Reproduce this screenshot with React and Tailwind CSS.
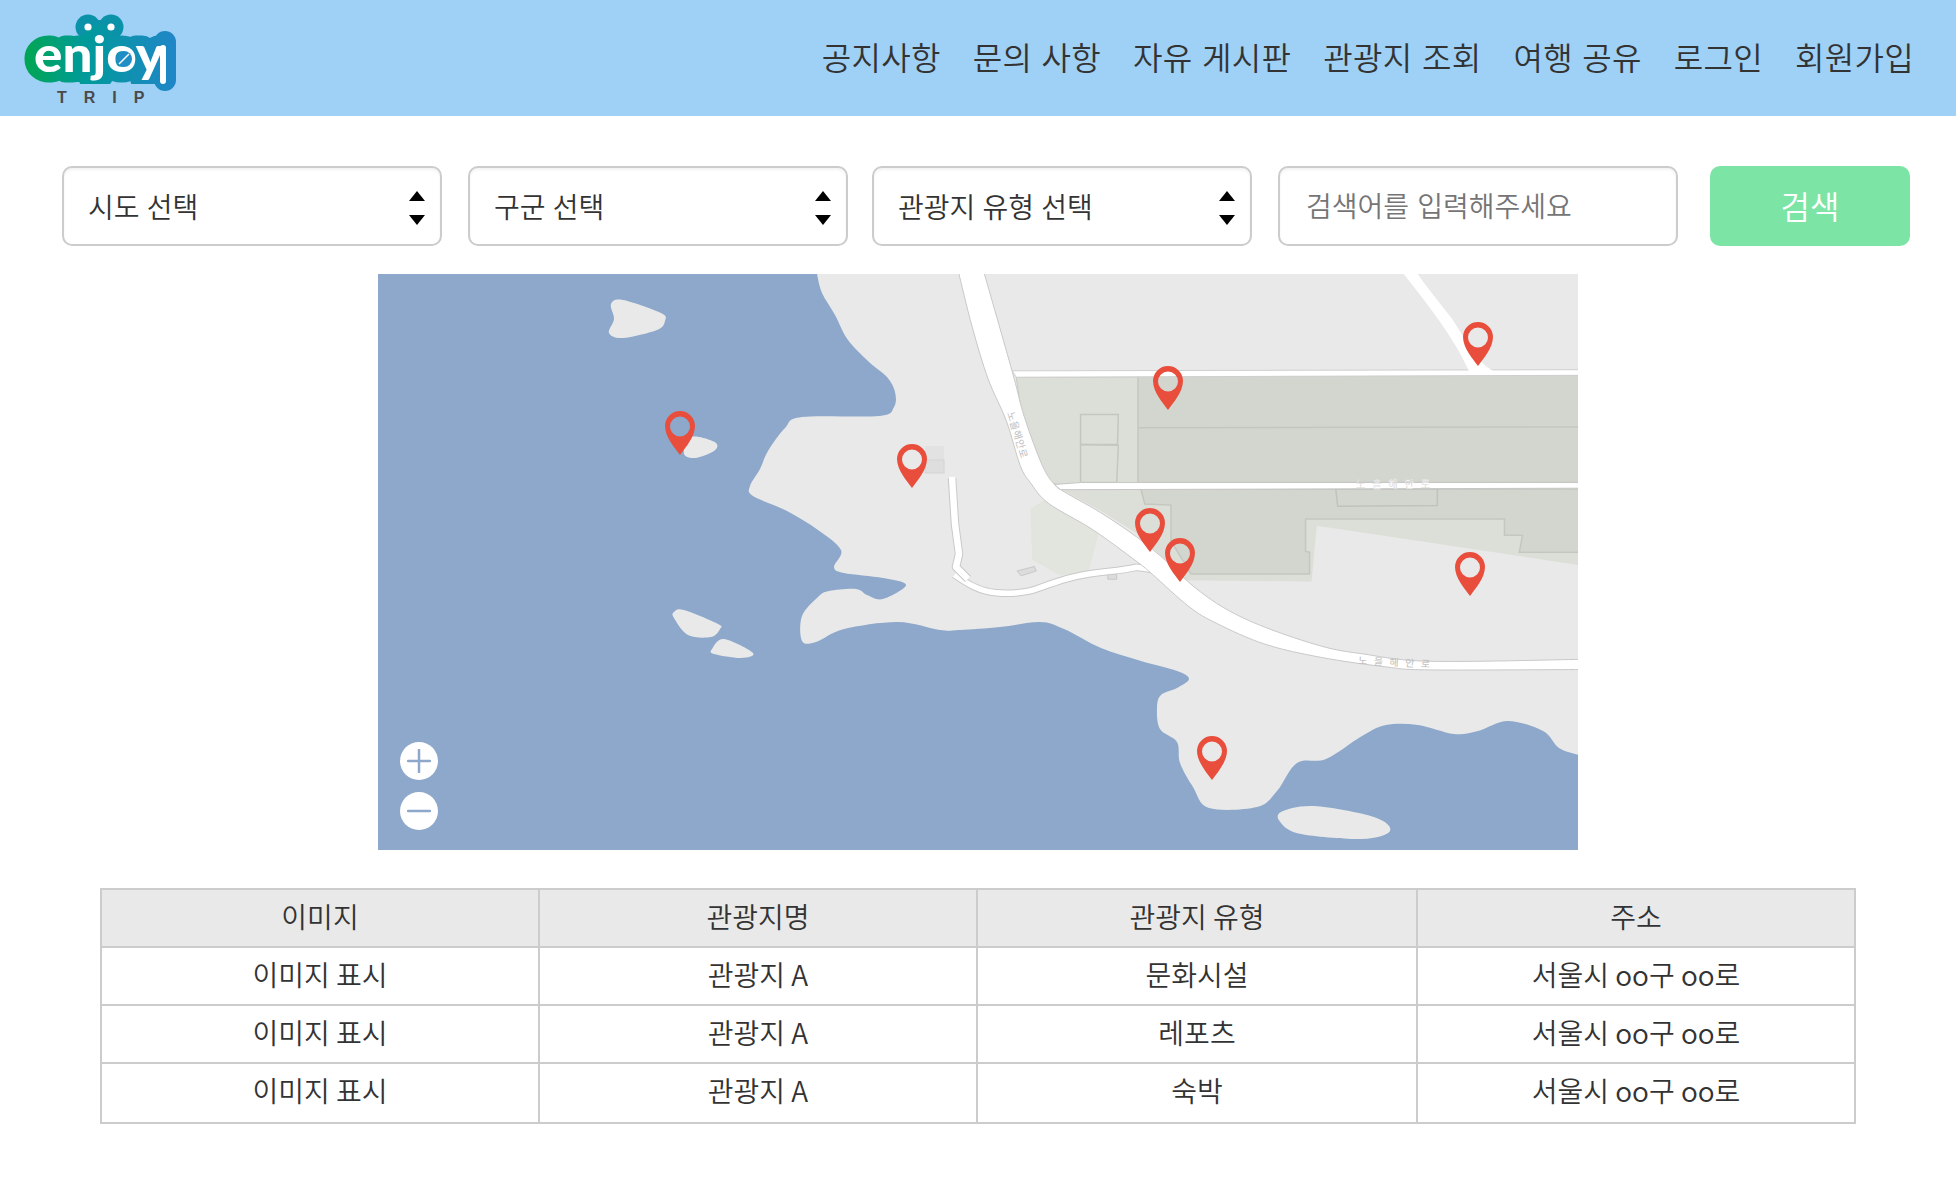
const FONT = '"Noto Sans CJK KR", "Noto Sans", sans-serif';

function curve(pts, closed) {
  const n = pts.length;
  const at = (i) => (closed ? pts[(i + n) % n] : pts[Math.max(0, Math.min(n - 1, i))]);
  let d = `${pts[0][0]} ${pts[0][1]}`;
  const end = closed ? n : n - 1;
  for (let i = 0; i < end; i++) {
    const p0 = at(i - 1), p1 = at(i), p2 = at(i + 1), p3 = at(i + 2);
    const c1 = [p1[0] + (p2[0] - p0[0]) / 6, p1[1] + (p2[1] - p0[1]) / 6];
    const c2 = [p2[0] - (p3[0] - p1[0]) / 6, p2[1] - (p3[1] - p1[1]) / 6];
    d += ` C${c1[0].toFixed(1)} ${c1[1].toFixed(1)} ${c2[0].toFixed(1)} ${c2[1].toFixed(1)} ${p2[0]} ${p2[1]}`;
  }
  return d;
}

function Logo() {
  return (
    <svg width="180" height="116" viewBox="0 0 180 116" className="shrink-0">
      <defs>
        <linearGradient id="lg" gradientUnits="userSpaceOnUse" x1="24" y1="0" x2="176" y2="0">
          <stop offset="0" stopColor="#00a651" />
          <stop offset="0.4" stopColor="#009a9a" />
          <stop offset="1" stopColor="#2086c8" />
        </linearGradient>
        <clipPath id="c1"><rect x="0" y="0" width="180" height="84" /></clipPath>
      </defs>
      <circle cx="88" cy="27" r="12.5" fill="#0a93a8" />
      <circle cx="111" cy="27" r="12.5" fill="#0a93a8" />
      <rect x="88" y="20" width="23" height="20" fill="#0a93a8" />
      <g clipPath="url(#c1)">
        <text x="34" y="72" fontFamily='"Lato", sans-serif' fontWeight="900" fontSize="50" textLength="130" lengthAdjust="spacingAndGlyphs" fill="url(#lg)" stroke="url(#lg)" strokeWidth="21" strokeLinejoin="round">enjoy</text>
      </g>
      <path d="M165 42 V80" stroke="url(#lg)" strokeWidth="22" strokeLinecap="round" />
      <g clipPath="url(#c1)">
        <text x="34" y="72" fontFamily='"Lato", sans-serif' fontWeight="900" fontSize="50" textLength="130" lengthAdjust="spacingAndGlyphs" fill="#fff">enjoy</text>
      </g>
      <path d="M163 48 V81" stroke="#fff" strokeWidth="6" strokeLinecap="round" />
      <circle cx="124" cy="59" r="8" fill="#1e8ec4" />
      <path d="M119 64 L126 57 L129 54 L122 61 Z" fill="#fff" stroke="#fff" strokeWidth="1.5" />
      <circle cx="88" cy="27" r="3.6" fill="#fff" />
      <circle cx="111" cy="27" r="3.6" fill="#fff" />
      <text x="57" y="103" fontFamily='"Liberation Sans", sans-serif' fontWeight="700" fontSize="16" fill="#4a4a4a" letterSpacing="17">TRIP</text>
    </svg>
  );
}

function Arrows() {
  return (
    <svg width="16" height="34" viewBox="0 0 16 34" className="absolute right-[15px] top-[23px] pointer-events-none">
      <path d="M8 0 L16 10 L0 10 Z" fill="#000" />
      <path d="M0 24 L16 24 L8 34 Z" fill="#000" />
    </svg>
  );
}

function Sel({ label, className }) {
  return (
    <div className={`relative flex h-[80px] w-[380px] shrink-0 items-center rounded-[10px] border-2 border-[#ccc] bg-white pl-[24px] text-[28px] font-[350] text-[#333] [word-spacing:1px] shadow-[inset_0_2px_3px_rgba(0,0,0,0.05)] ${className}`}>
      {label}
      <Arrows />
    </div>
  );
}

function Pin({ x, y }) {
  return (
    <path
      transform={`translate(${x} ${y})`}
      fillRule="evenodd"
      fill="#e94e3c"
      d="M0 0 C-5 -7 -15 -18 -15 -29 A15 15 0 0 1 15 -29 C15 -18 5 -7 0 0 Z M0 -38.5 A10 10 0 1 0 0 -18.5 A10 10 0 1 0 0 -38.5 Z"
    />
  );
}

const coast = [[439,0],[444,19],[457,41],[470,66],[491,88],[509,103],[517,118],[516,133],[501,142],[424,143],[407,154],[390,177],[382,195],[372,212],[375,222],[409,237],[440,256],[463,276],[456,293],[466,299],[505,304],[528,311],[505,325],[489,321],[478,315],[451,317],[440,323],[424,342],[424,367],[438,368],[466,355],[520,348],[562,356],[582,356],[622,353],[662,348],[686,355],[723,374],[763,387],[799,397],[811,405],[799,414],[783,421],[779,434],[782,455],[799,468],[802,489],[815,513],[831,534],[879,533],[899,517],[919,489],[948,485],[984,462],[1008,451],[1040,451],[1076,460],[1100,457],[1130,447],[1165,457],[1181,474],[1201,481]];
const islands = [
  [[233,30],[245,26],[283,39],[287,47],[279,56],[245,64],[231,59],[236,45]],
  [[310,165],[321,163],[338,169],[336,177],[317,184],[306,180]],
  [[296,338],[306,336],[340,350],[342,355],[333,363],[310,361],[296,344]],
  [[346,365],[375,379],[363,384],[336,380],[334,375]],
  [[903,538],[936,532],[996,543],[1012,557],[984,565],[923,560],[903,549]],
];
const roadLeft = [[-5,0],[30,150],[70,290],[115,400],[150,520],[175,565],[220,620],[330,690],[440,775],[480,810],[570,895],[640,940],[760,995],[900,1030],[1060,1055],[1170,1063],[1545,1062]];
const roadRight = [[1545,1035],[1170,1040],[1000,1020],[900,1000],[760,950],[660,900],[580,840],[515,775],[440,710],[350,645],[260,590],[235,570],[205,520],[160,390],[130,270],[58,0]];
const branch = "M1100 5 C1170 100 1230 180 1268 272 L1340 272 C1305 262 1290 240 1225 130 C1195 90 1165 50 1135 5 Z";
const small = "M-14 810 C20 835 50 855 90 858 C130 862 170 856 190 848 C230 832 270 818 300 812 C350 802 400 800 440 790 L480 796";

function MapView() {
  return (
    <div className="relative mx-auto mt-[28px] h-[576px] w-[1200px] overflow-hidden bg-[#8da8ca]">
      <svg width="1200" height="576" viewBox="0 0 1200 576" className="block">
        <path d={`M${curve(coast)} L1201 -1 L439 -1 Z`} fill="#e9e9e9" />
        {islands.map((p, i) => <path key={i} d={`M${curve(p, true)} Z`} fill="#e9e9e9" />)}
        <rect x="547" y="172" width="19" height="14" fill="#e2e2e2" />
        <rect x="547" y="186" width="19" height="13" fill="#dedede" stroke="#d4d4d4" />
        <g transform="translate(582 -4) scale(0.4018 0.3762)">
          <polygon points="140,285 1545,280 1545,570 240,570 175,540" fill="#dcdfd8" stroke="#c9cbc4" vectorEffect="non-scaling-stroke" />
          <polygon points="443,280 1545,280 1545,565 443,565" fill="#d3d6ce" stroke="#c4c7bf" strokeWidth="1.5" vectorEffect="non-scaling-stroke" />
          <line x1="443" y1="419" x2="1545" y2="417" stroke="#c4c7bf" strokeWidth="1.5" vectorEffect="non-scaling-stroke" />
          <polygon points="300,384 394,384 392,464 300,464" fill="none" stroke="#c4c7bf" strokeWidth="1.5" vectorEffect="non-scaling-stroke" />
          <polygon points="300,464 394,466 390,565 300,565" fill="none" stroke="#c4c7bf" strokeWidth="1.5" vectorEffect="non-scaling-stroke" />
          <polygon points="175,635 250,585 345,700 320,800 250,812 180,770" fill="#e2e4de" />
          <polygon points="255,585 1545,585 1545,785 888,680 875,828 560,825 515,775 440,700 350,640" fill="#dcdfd8" />
          <polygon points="450,582 460,622 525,625 525,720 575,808 870,808 870,750 860,748 860,662 1355,662 1355,705 1400,705 1392,750 1545,750 1545,582" fill="#d3d6ce" stroke="#c4c7bf" strokeWidth="1.5" vectorEffect="non-scaling-stroke" />
          <polygon points="935,582 940,628 1188,626 1188,582" fill="#d3d6ce" stroke="#c0c3bb" strokeWidth="1.5" vectorEffect="non-scaling-stroke" />
          <polygon points="142,800 185,788 190,800 152,813" fill="#dcdcdc" stroke="#c8c8c8" vectorEffect="non-scaling-stroke" />
          <rect x="368" y="808" width="22" height="14" fill="#dcdcdc" stroke="#c8c8c8" vectorEffect="non-scaling-stroke" />
          <polygon points="130,268 1545,265 1545,280 140,285" fill="#fff" stroke="#cfcfcf" vectorEffect="non-scaling-stroke" />
          <polygon points="235,570 300,565 1545,565 1545,580 250,584" fill="#fff" stroke="#c6c6c6" vectorEffect="non-scaling-stroke" />
          <path d={branch} fill="#fff" vectorEffect="non-scaling-stroke" />
          <path d={small} fill="none" stroke="#c9c9c9" strokeWidth="7.5" vectorEffect="non-scaling-stroke" />
          <path d={small} fill="none" stroke="#fff" strokeWidth="5.5" vectorEffect="non-scaling-stroke" />
          <path d={`M${curve(roadLeft)} L${curve(roadRight)} Z`} fill="#fff" stroke="#c9c9c9" vectorEffect="non-scaling-stroke" />
        </g>
        <path d="M574 204 L577 250 L581 280 L578 293 L590 305" fill="none" stroke="#c9c9c9" strokeWidth="8.5" strokeLinejoin="round" />
        <path d="M574 203 L577 250 L581 280 L578 293 L590 305" fill="none" stroke="#fff" strokeWidth="6.5" strokeLinejoin="round" />
        <text x="978" y="214" fontFamily={FONT} fontSize="10" fill="#bdbdbd" letterSpacing="7" stroke="#fff" strokeWidth="0.3">노을해안로</text>
        <text x="980" y="390" fontFamily={FONT} fontSize="10" fill="#bdbdbd" letterSpacing="6.5" transform="rotate(3 980 390)">노을해안로</text>
        <text x="629" y="139" fontFamily={FONT} fontSize="10" fill="#bdbdbd" letterSpacing="0.5" transform="rotate(73 629 139)">노을해안로</text>
        <Pin x={302} y={181} />
        <Pin x={534} y={214} />
        <Pin x={1100} y={92} />
        <Pin x={790} y={136} />
        <Pin x={772} y={278} />
        <Pin x={802} y={308} />
        <Pin x={1092} y={322} />
        <Pin x={834} y={506} />
      </svg>
      <button className="absolute left-[22px] top-[468px] flex h-[38px] w-[38px] items-center justify-center rounded-full bg-white">
        <svg width="24" height="24" viewBox="0 0 24 24"><path d="M1 12 H23 M12 1 V23" stroke="#8da8ca" strokeWidth="2.5" strokeLinecap="round" /></svg>
      </button>
      <button className="absolute left-[22px] top-[518px] flex h-[38px] w-[38px] items-center justify-center rounded-full bg-white">
        <svg width="24" height="24" viewBox="0 0 24 24"><path d="M1 12 H23" stroke="#8da8ca" strokeWidth="2.5" strokeLinecap="round" /></svg>
      </button>
    </div>
  );
}

const nav = ["공지사항", "문의 사항", "자유 게시판", "관광지 조회", "여행 공유", "로그인", "회원가입"];
const rows = [
  ["이미지 표시", "관광지 A", "문화시설", "서울시 oo구 oo로"],
  ["이미지 표시", "관광지 A", "레포츠", "서울시 oo구 oo로"],
  ["이미지 표시", "관광지 A", "숙박", "서울시 oo구 oo로"],
];

export default function App() {
  return (
    <div className="min-h-[1200px] bg-white text-[#333]" style={{ fontFamily: FONT }}>
      <header className="flex h-[116px] items-center justify-between bg-[#9fd0f5] pr-[42px]">
        <Logo />
        <nav className="-mt-[5px] flex gap-[32px] text-[32px] font-[350] tracking-[0.3px] text-[#333] [word-spacing:2px]">
          {nav.map((n) => <a key={n}>{n}</a>)}
        </nav>
      </header>
      <div className="mt-[50px] flex pl-[62px]">
        <Sel label="시도 선택" />
        <Sel label="구군 선택" className="ml-[26px]" />
        <Sel label="관광지 유형 선택" className="ml-[24px]" />
        <div className="ml-[26px] flex h-[80px] w-[400px] shrink-0 items-center rounded-[10px] border-2 border-[#ccc] bg-white pb-[2px] pl-[26px] text-[28px] font-[350] text-[#757575] [word-spacing:2px] shadow-[inset_0_2px_3px_rgba(0,0,0,0.05)]">검색어를 입력해주세요</div>
        <button className="ml-[32px] h-[80px] w-[200px] shrink-0 rounded-[10px] bg-[#7ce5a6] pb-[2px] text-[32px] font-[350] text-white">검색</button>
      </div>
      <MapView />
      <table className="mx-auto mt-[38px] w-[1754px] table-fixed border-collapse text-center text-[28px] font-[350] text-[#333]">
        <colgroup>
          <col className="w-[438px]" />
          <col className="w-[438px]" />
          <col className="w-[440px]" />
          <col className="w-[438px]" />
        </colgroup>
        <thead>
          <tr className="h-[58px] bg-[#e9e9e9]">
            {["이미지", "관광지명", "관광지 유형", "주소"].map((h) => (
              <th key={h} className="border-2 border-[#ccc] pb-1 font-[350]">{h}</th>
            ))}
          </tr>
        </thead>
        <tbody>
          {rows.map((r, i) => (
            <tr key={i} className={i === 2 ? "h-[60px]" : "h-[58px]"}>
              {r.map((c, j) => <td key={j} className={i === 2 ? "border-2 border-[#ccc] pb-[6px]" : "border-2 border-[#ccc] pb-1"}>{c}</td>)}
            </tr>
          ))}
        </tbody>
      </table>
    </div>
  );
}
